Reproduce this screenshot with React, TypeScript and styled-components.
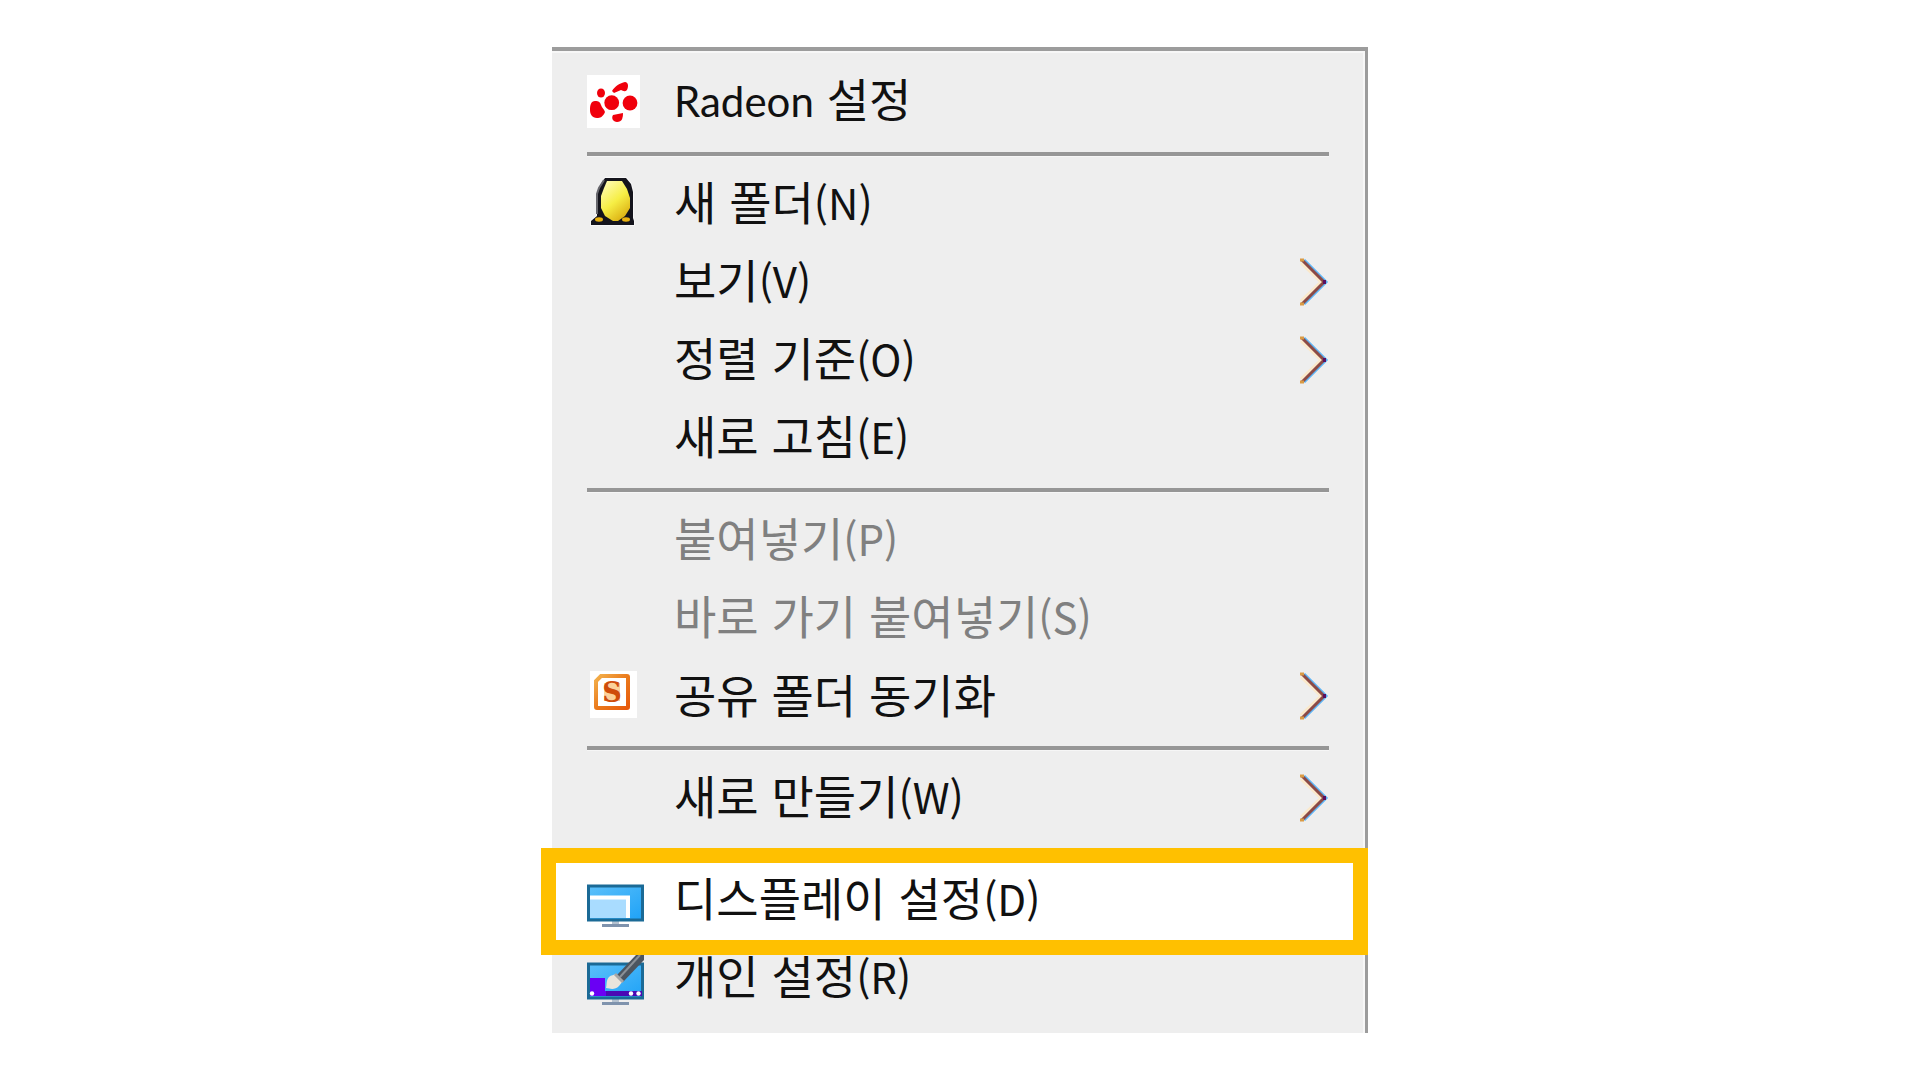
import React from "react";
import styled, { createGlobalStyle, css } from "styled-components";

const GlobalStyle = createGlobalStyle`
  * { box-sizing: border-box; }
  body {
    margin: 0;
    background: #ffffff;
  }
`;

const Page = styled.main`
  display: flex;
  justify-content: center;
  padding: 47px 24px;
`;

const Menu = styled.ul`
  width: 816px;
  max-width: 100%;
  margin: 0;
  padding: 13px 0 15px;
  list-style: none;
  background: #eeeeee;
  border-top: 4px solid #9c9c9c;
  border-right: 3px solid #9c9c9c;
  box-shadow: inset -2px 2px 0 #f7f7f7;
`;

const MenuEntry = styled.li`
  display: block;
`;

const Separator = styled.li`
  height: 4px;
  margin: 10px 36px 10px 35px;
  background: #969696;
  box-shadow: 0 1px 0 #f6f6f6;
`;

const MenuButton = styled.button<{ $highlighted?: boolean }>`
  position: relative;
  display: flex;
  align-items: center;
  width: 100%;
  height: 78px;
  margin: 0;
  padding: 0 36px 0 35px;
  border: 0;
  background: transparent;
  color: #111111;
  font-family: "Noto Sans CJK KR", sans-serif;
  font-size: 46px;
  font-weight: 400;
  text-align: left;
  white-space: nowrap;

  &:disabled {
    color: #808080;
  }

  ${({ $highlighted }) =>
    $highlighted &&
    css`
      z-index: 1;
      background: #ffffff;

      &::after {
        content: "";
        position: absolute;
        inset: -14px -3px -15px -11px;
        border: 15px solid #ffc000;
      }
    `}
`;

const IconSlot = styled.span`
  flex: none;
  width: 87px;
  height: 78px;
`;

const IconDrawing = styled.svg`
  display: block;
  width: 60px;
  height: 78px;
`;

const Label = styled.span`
  flex: 1;
  padding-bottom: 8px;
  line-height: 70px;
`;

const Brand = styled.span`
  font-family: Lato, "Noto Sans", sans-serif;
  font-size: 42px;
`;

const AccessKey = styled.span`
  font-size: 42px;
`;

const Arrow = styled.svg`
  flex: none;
  width: 30px;
  height: 50px;
`;

const RadeonIcon = () => (
  <IconDrawing viewBox="0 0 60 78" aria-hidden="true">
    <rect x="0" y="11" width="53" height="53" fill="#fff" />
    <g fill="#f0000c">
      <circle cx="24.7" cy="38.7" r="7.4" />
      <circle cx="43" cy="39" r="7.4" />
      <path d="M8 37c4 0 5 1 6 4s3 4 4 7c-2 5-5 6-8 6-5 0-7-4-7-8 0-5 1-9 5-9z" />
      <ellipse cx="14" cy="29" rx="4" ry="4.5" />
      <path d="M26 51l10-2c0 5-1 9-6 9-4 0-6-4-4-7z" />
      <path d="M25 27c3-5 8-8 13-9 3 0 4 4 2 8-2 2-4 1-6 0l-7 3z" />
    </g>
  </IconDrawing>
);

const EggIcon = () => (
  <IconDrawing viewBox="0 0 60 78" aria-hidden="true">
    <defs>
      <linearGradient id="egg" x1="0.2" y1="0" x2="0.8" y2="1">
        <stop offset="0" stopColor="#fffbb0" />
        <stop offset="0.5" stopColor="#f6ee45" />
        <stop offset="1" stopColor="#d9a90c" />
      </linearGradient>
    </defs>
    <path
      d="M18 12h21l5 6 2 8v26l1 3v4H4v-4l6-5V28l4-10z"
      fill="#14141c"
      stroke="#f8f8f8"
      strokeWidth="2"
      paintOrder="stroke"
    />
    <path d="M17 14l-5 8-2 6v20" stroke="#66666c" strokeWidth="2" fill="none" />
    <path d="M20 15h15l5 8 3 9v10l-5 8-7 5h-5l-8-5-4-8V30l3-8z" fill="url(#egg)" />
    <ellipse cx="12" cy="53.500" rx="4" ry="2.200" fill="#e8b110" />
    <ellipse cx="39" cy="53.500" rx="4" ry="2.200" fill="#e8b110" />
  </IconDrawing>
);

const SyncIcon = () => (
  <IconDrawing viewBox="0 0 60 78" aria-hidden="true">
    <defs>
      <linearGradient id="sync" x1="0" y1="0" x2="1" y2="1">
        <stop offset="0" stopColor="#f3b04c" />
        <stop offset="0.5" stopColor="#ea7a1c" />
        <stop offset="1" stopColor="#e85a0c" />
      </linearGradient>
    </defs>
    <rect x="3" y="13" width="47" height="47" fill="#fff" />
    <path d="M14 18h26q1 0 1 1v30q0 1-1 1H10q-1 0-1-1V23z" fill="none" stroke="url(#sync)" strokeWidth="4" />
    <rect x="17" y="25" width="16" height="18" fill="#fbd19a" />
    <text
      x="25"
      y="44"
      textAnchor="middle"
      fontFamily="DejaVu Serif, serif"
      fontWeight="700"
      fontSize="27"
      fill="#cf4c0a"
    >
      S
    </text>
  </IconDrawing>
);

const MonitorBase = () => (
  <>
    <path d="M25 58h7v4h-7z" fill="#b5c2d0" />
    <path d="M15 63.500h27" stroke="#7f93ad" strokeWidth="3" />
    <rect x="1.500" y="24" width="54" height="34" fill="url(#screen)" stroke="#1b6a96" strokeWidth="3" />
  </>
);

const DisplayIcon = () => (
  <IconDrawing viewBox="0 0 60 78" aria-hidden="true">
    <defs>
      <linearGradient id="screen" x1="0" y1="0" x2="1" y2="1">
        <stop offset="0" stopColor="#5cc0fa" />
        <stop offset="1" stopColor="#1ea2f7" />
      </linearGradient>
    </defs>
    <MonitorBase />
    <path d="M3 37h36v19H3z" fill="#a9dcff" />
    <path d="M3 35.500h38V56" fill="none" stroke="#fff" strokeWidth="4" />
  </IconDrawing>
);

const PersonalizeIcon = () => (
  <IconDrawing viewBox="0 0 60 78" aria-hidden="true">
    <MonitorBase />
    <path d="M3 38h15v13h37v5H3z" fill="#6a00f4" />
    <path d="M19 51h36v5H19z" fill="#4b08b4" />
    <g fill="#fff">
      <circle cx="5" cy="53.500" r="2.200" />
      <circle cx="44" cy="53.500" r="2.200" />
      <circle cx="51.500" cy="53.500" r="2.200" />
    </g>
    <path d="M49 15h8v5L36 42l-7-6z" fill="#4c5560" />
    <path d="M53 15L33 37" stroke="#8a9097" strokeWidth="2" />
    <path d="M29 34l7 7-4 5c-4 4-8 3-13 2 1-3 0-8 3-11 2-2 5-2 7-3z" fill="#e9e4dc" />
    <path d="M28 34l8 8" stroke="#a7a7a7" strokeWidth="3" />
  </IconDrawing>
);

const SubmenuArrow = () => (
  <Arrow viewBox="0 0 30 50" fill="none" aria-hidden="true">
    <path d="M2 5l20 19L2 43" stroke="#fbe9cb" strokeWidth="3" />
    <path d="M5 2l22 22L5 46" stroke="#5db4f5" strokeWidth="3" />
    <path d="M3 2l22 22L3 46" stroke="#8c4a45" strokeWidth="3" />
    <path d="M1 2h4M1 46h4" stroke="#d99a45" strokeWidth="3" />
    <path d="M24 24h3" stroke="#5a1060" strokeWidth="4" />
  </Arrow>
);

type Item = {
  label: string;
  brand?: string;
  accessKey?: string;
  icon?: React.ComponentType;
  submenu?: boolean;
  disabled?: boolean;
  highlighted?: boolean;
};

const groups: Item[][] = [
  [{ brand: "Radeon", label: " 설정", icon: RadeonIcon }],
  [
    { label: "새 폴더", accessKey: "N", icon: EggIcon },
    { label: "보기", accessKey: "V", submenu: true },
    { label: "정렬 기준", accessKey: "O", submenu: true },
    { label: "새로 고침", accessKey: "E" },
  ],
  [
    { label: "붙여넣기", accessKey: "P", disabled: true },
    { label: "바로 가기 붙여넣기", accessKey: "S", disabled: true },
    { label: "공유 폴더 동기화", icon: SyncIcon, submenu: true },
  ],
  [{ label: "새로 만들기", accessKey: "W", submenu: true }],
  [
    { label: "디스플레이 설정", accessKey: "D", icon: DisplayIcon, highlighted: true },
    { label: "개인 설정", accessKey: "R", icon: PersonalizeIcon },
  ],
];

export default function App() {
  return (
    <>
      <GlobalStyle />
      <Page lang="ko">
        <Menu role="menu">
          {groups.map((group, index) => (
            <React.Fragment key={index}>
              {index > 0 && <Separator role="separator" />}
              {group.map(({ label, brand, accessKey, icon: Icon, submenu, disabled, highlighted }) => (
                <MenuEntry key={label} role="none">
                  <MenuButton
                    type="button"
                    role="menuitem"
                    disabled={disabled}
                    aria-haspopup={submenu ? "menu" : undefined}
                    $highlighted={highlighted}
                  >
                    <IconSlot>{Icon && <Icon />}</IconSlot>
                    <Label>
                      {brand && <Brand>{brand}</Brand>}
                      {label}
                      {accessKey && <AccessKey>{`(${accessKey})`}</AccessKey>}
                    </Label>
                    {submenu && <SubmenuArrow />}
                  </MenuButton>
                </MenuEntry>
              ))}
            </React.Fragment>
          ))}
        </Menu>
      </Page>
    </>
  );
}
